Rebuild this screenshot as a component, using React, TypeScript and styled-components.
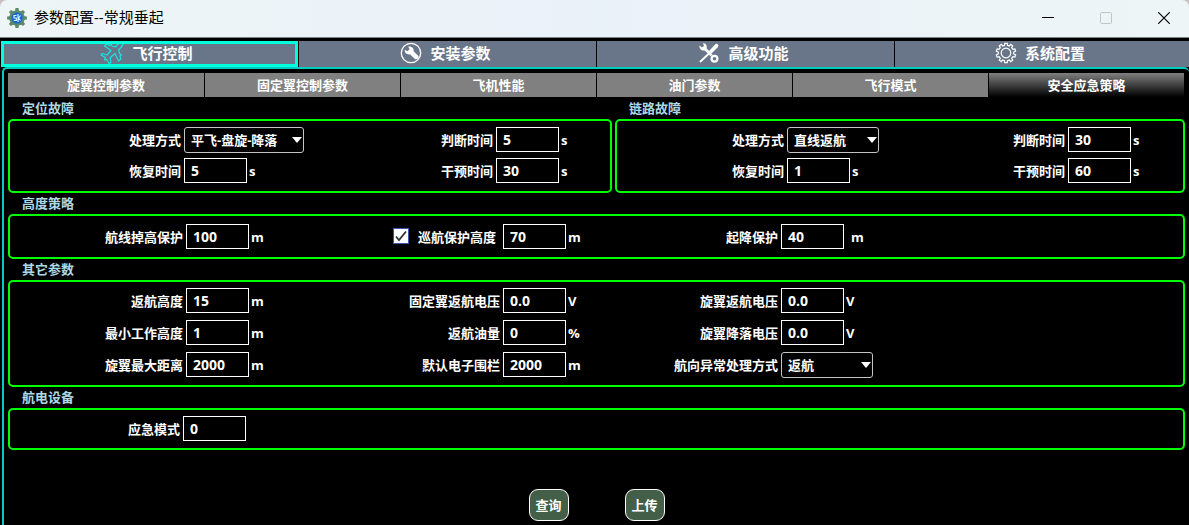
import React, { useState } from 'react';
import styled, { createGlobalStyle, css } from 'styled-components';

const GlobalStyle = createGlobalStyle`
  *, *::before, *::after { box-sizing: border-box; }
  body {
    margin: 0;
    background: #000;
    color: #fff;
    font-family: 'Open Sans', 'Noto Sans CJK SC', sans-serif;
    font-size: 13px;
    font-weight: 700;
  }
  button, input, select { font: inherit; color: inherit; margin: 0; }
`;

const Window = styled.div`
  display: flex;
  flex-direction: column;
  min-height: 100vh;
  overflow: hidden;
`;

const TitleFrame = styled.div`
  background: linear-gradient(#cbbfc2 50%, #808080 50%);
  padding-bottom: 1px;
`;

const TitleBar = styled.header`
  display: flex;
  align-items: center;
  height: 37px;
  padding: 0 10px 2px 7px;
  background: linear-gradient(90deg, #edf5f7, #eaf2f9 50%, #edf5f7);
  border-radius: 7px 7px 0 0;
  color: #000;
`;

const WindowTitle = styled.h1`
  flex: 1;
  margin: 0 0 0 7px;
  padding-bottom: 1px;
  font-size: 15px;
  line-height: 20px;
  font-weight: 400;
`;

const WindowControls = styled.div`
  display: flex;
  gap: 28px;
`;

const WindowButton = styled.button`
  display: grid;
  place-items: center;
  width: 30px;
  height: 30px;
  padding: 0;
  border: 0;
  background: transparent;
`;

const MainTabs = styled.nav`
  display: grid;
  grid-template-columns: 298fr 298fr 298fr 295fr;
  padding-top: 3px;
`;

const MainTab = styled.button<{ $active: boolean }>`
  display: flex;
  align-items: center;
  justify-content: center;
  gap: 8px;
  height: 26px;
  padding: 0 4px 2px 0;
  border: 0;
  border-left: 1px solid #000;
  background: #69768a;
  font-size: 15px;
  line-height: 20px;
  overflow: hidden;
  ${p => p.$active && css`
    margin-left: 1px;
    border: 3px solid #00ffdc;
    padding-right: 6px;
  `}
`;

const Panel = styled.main`
  flex: 1;
  margin-left: 2px;
  padding: 4px;
  border: 2px solid #00cdbd;
  border-width: 2px 0 0 2px;
  border-radius: 5px 5px 0 0;
`;

const SubTabs = styled.nav`
  display: grid;
  grid-template-columns: repeat(6, minmax(0, 1fr));
  margin: 0 1px 1px 0;
`;

const SubTab = styled.button<{ $active: boolean }>`
  height: 24px;
  padding: 0;
  border: 0;
  background: ${p => (p.$active ? 'linear-gradient(#808080, #000)' : '#808080')};
  line-height: 20px;
  & + & { border-left: 1px solid #000; }
`;

const FaultRow = styled.div`
  display: grid;
  grid-template-columns: 604fr 570fr;
  gap: 3px;
`;

const GroupTitle = styled.h2`
  margin: 0 0 0 14px;
  height: 21px;
  font-size: 13px;
  line-height: 20px;
  font-weight: 700;
  color: lightblue;
`;

const GroupBox = styled.div<{ $columns: string; $rowGap?: number; $bottom?: number }>`
  display: grid;
  grid-template-columns: ${p => p.$columns};
  grid-auto-rows: 25px;
  gap: ${p => p.$rowGap ?? 6}px 3px;
  padding: 6px 0 ${p => p.$bottom ?? 8}px;
  border: 2px solid #00ff00;
  border-radius: 5px;
`;

const TallGroupBox = styled(GroupBox)`
  padding-top: 8px;
`;

const FieldLabel = styled.label`
  text-align: right;
  line-height: 27px;
  white-space: nowrap;
`;

const CheckLabel = styled.div`
  display: flex;
  justify-content: flex-end;
  align-items: flex-start;
  gap: 9px;
  padding: 0 4px 0 0;
`;

const CheckBox = styled.input`
  && { margin-top: 4px; }
  appearance: none;
  width: 16px;
  height: 16px;
  border: 1px solid #3a55b0;
  background: #fff;
  &:checked {
    background: #fff url("data:image/svg+xml,%3Csvg xmlns='http://www.w3.org/2000/svg' viewBox='0 0 14 14'%3E%3Cpath d='M2 7.5 5 11 12 2.5' fill='none' stroke='%23333' stroke-width='1.8'/%3E%3C/svg%3E");
  }
`;

const Control = styled.div`
  display: flex;
  min-width: 0;
  height: 25px;
`;

const TextBox = styled.input`
  width: 63px;
  height: 25px;
  padding: 0 6px;
  border: 1px solid #fff;
  background: #000;
  font-size: 14px;
  line-height: 20px;
  border-radius: 0;
  outline: none;
`;

const Unit = styled.span<{ $gap: number }>`
  margin-left: ${p => p.$gap}px;
  line-height: 27px;
`;

const SelectFrame = styled.div<{ $wide: boolean }>`
  position: relative;
  flex: none;
  width: ${p => (p.$wide ? 120 : 92)}px;
  height: 26px;
  & > svg { position: absolute; right: 2px; top: 10px; pointer-events: none; }
`;

const SelectBox = styled.select`
  appearance: none;
  width: 100%;
  height: 26px;
  padding: 0 0 0 6px;
  border: 1px solid #c4c4c4;
  border-radius: 3px;
  background: #000;
  outline: none;
`;

const Actions = styled.footer`
  display: flex;
  justify-content: center;
  gap: 56px;
  margin-top: 39px;
`;

const ActionButton = styled.button`
  width: 40px;
  height: 32px;
  padding: 0;
  border: 1px solid #fff;
  border-radius: 9px;
  background: #435f47;
  line-height: 20px;
`;

function gearPath(c: number, outer: number, inner: number, teeth: number) {
  const points: string[] = [];
  const step = (Math.PI * 2) / teeth;
  for (let i = 0; i < teeth; i++) {
    const a = i * step - Math.PI / 2;
    [[-0.3, inner], [-0.2, outer], [0.2, outer], [0.3, inner]].forEach(([t, r]) => {
      points.push(`${(c + r * Math.cos(a + t * step)).toFixed(2)} ${(c + r * Math.sin(a + t * step)).toFixed(2)}`);
    });
  }
  return `M${points.join('L')}Z`;
}

const AppIcon = () => (
  <svg width="20" height="20" viewBox="0 0 20 20" aria-hidden="true">
    <path d={gearPath(10, 10, 7.8, 8)} fill="#5c8a68" />
    <circle cx="10" cy="10" r="5.6" fill="#1467d8" />
    <path d="M9.500 7.500H7V10h2.300v2.500H6.800M11 6v8M13.500 7.500 11.500 10l2 2.500" fill="none" stroke="#d8f2ff" strokeWidth="1.200" />
  </svg>
);

const PlaneIcon = () => (
  <svg width="24" height="24" viewBox="0 0 24 24" fill="none" stroke="#14e6e6" strokeWidth="1.2" strokeLinejoin="round" aria-hidden="true">
    <path d="M22.500 1C20 .5 18 3 15.500 6L12 5l-1-1.500-1.500 1L7 3 4.500 5l6.500 4.500L7 14l-5-1.500L1 14l4.500 2.500L4.500 19l2.500-.5 2 4 2-1-.8-5L15 12.500l3.500 7.500 2.300-2-.8-3 1.500-1-2-1.500-.8-3.500C21.500 6 24 4 22.500 1Z" />
  </svg>
);

const WrenchIcon = () => (
  <svg width="22" height="22" viewBox="0 0 22 22" aria-hidden="true">
    <circle cx="11" cy="11" r="9.700" fill="none" stroke="#fff" strokeWidth="1.300" />
    <path d="M4.800 7.800 7.500 9.300 9.500 7.300 8.200 4.600C11.300 3.800 14.200 6.200 13.600 9.200L18.400 14C19.200 15.800 17.200 18 15.200 17.200L10.200 12.400C7 13 4.200 10.800 4.800 7.800Z" fill="#fff" />
  </svg>
);

const ToolsIcon = () => (
  <svg width="22" height="22" viewBox="0 0 22 22" aria-hidden="true">
    <path d="M2.500 19.500 11.500 11" stroke="#fff" strokeWidth="1.800" strokeLinecap="round" />
    <path d="M11 9 17 2.500 19 1.500 20.500 3.500 19.500 5.500 13.500 11.500Z" fill="#fff" />
    <path d="M1.500 3.500 4 5.500 6 4 5 1.300C8 1.200 9.500 4 8.500 6.300L14.500 12.500 12.700 14.300 6.500 8.500C3.500 9 1 6.500 1.500 3.500Z" fill="#fff" />
    <circle cx="16.500" cy="16.800" r="2.900" fill="none" stroke="#fff" strokeWidth="2.200" />
  </svg>
);

const GearIcon = () => (
  <svg width="22" height="22" viewBox="0 0 22 22" fill="none" stroke="#fff" strokeWidth="1.200" aria-hidden="true">
    <path d={gearPath(11, 9.8, 7.8, 10)} />
    <circle cx="11" cy="11" r="4.800" />
  </svg>
);

const mainTabs = [
  { name: '飞行控制', Icon: PlaneIcon },
  { name: '安装参数', Icon: WrenchIcon },
  { name: '高级功能', Icon: ToolsIcon },
  { name: '系统配置', Icon: GearIcon },
];

const subTabs = ['旋翼控制参数', '固定翼控制参数', '飞机性能', '油门参数', '飞行模式', '安全应急策略'];

const WIDE_COLUMNS =
  'minmax(0, 173fr) minmax(0, 120fr) minmax(0, 191fr) minmax(0, 120fr) minmax(0, 152fr) minmax(0, 402fr)';

interface FieldProps {
  id: string;
  label: string;
  value: string;
  unit?: string;
  unitGap?: number;
  checkable?: boolean;
}

const NumberField = ({ id, label, value, unit, unitGap = 2, checkable }: FieldProps) => (
  <>
    {checkable ? (
      <CheckLabel>
        <CheckBox type="checkbox" defaultChecked aria-label={`启用${label}`} />
        <FieldLabel htmlFor={id}>{label}</FieldLabel>
      </CheckLabel>
    ) : (
      <FieldLabel htmlFor={id}>{label}</FieldLabel>
    )}
    <Control>
      <TextBox id={id} defaultValue={value} />
      {unit && <Unit $gap={unitGap}>{unit}</Unit>}
    </Control>
  </>
);

interface SelectProps {
  id: string;
  label: string;
  value: string;
  wide?: boolean;
}

const SelectField = ({ id, label, value, wide = false }: SelectProps) => (
  <>
    <FieldLabel htmlFor={id}>{label}</FieldLabel>
    <Control>
      <SelectFrame $wide={wide}>
        <SelectBox id={id} defaultValue={value}>
          <option>{value}</option>
        </SelectBox>
        <svg width="10" height="6" viewBox="0 0 10 6" aria-hidden="true">
          <path d="M0 0h10L5 6Z" fill="#fff" />
        </svg>
      </SelectFrame>
    </Control>
  </>
);

export default function App() {
  const [mainTab, setMainTab] = useState(0);
  const [subTab, setSubTab] = useState(5);

  return (
    <Window>
      <GlobalStyle />
      <TitleFrame>
        <TitleBar>
          <AppIcon />
          <WindowTitle>参数配置--常规垂起</WindowTitle>
          <WindowControls>
            <WindowButton aria-label="最小化">
              <svg width="12" height="12" viewBox="0 0 12 12"><path d="M0 5.500h12" stroke="#000" /></svg>
            </WindowButton>
            <WindowButton aria-label="最大化" disabled>
              <svg width="12" height="12" viewBox="0 0 12 12"><rect x=".5" y=".5" width="11" height="11" rx="1" fill="none" stroke="#bfc6c8" /></svg>
            </WindowButton>
            <WindowButton aria-label="关闭">
              <svg width="12" height="12" viewBox="0 0 12 12"><path d="M.3.3l11.400 11.400M11.700.3.3 11.700" stroke="#000" strokeWidth="1.200" /></svg>
            </WindowButton>
          </WindowControls>
        </TitleBar>
      </TitleFrame>

      <MainTabs>
        {mainTabs.map(({ name, Icon }, i) => (
          <MainTab key={name} $active={i === mainTab} onClick={() => setMainTab(i)}>
            <Icon />
            {name}
          </MainTab>
        ))}
      </MainTabs>

      <Panel>
        <SubTabs>
          {subTabs.map((name, i) => (
            <SubTab key={name} $active={i === subTab} onClick={() => setSubTab(i)}>{name}</SubTab>
          ))}
        </SubTabs>

        <FaultRow>
          <section>
            <GroupTitle>定位故障</GroupTitle>
            <GroupBox $columns="minmax(0, 171fr) minmax(0, 126fr) minmax(0, 180fr) minmax(0, 114fr)">
              <SelectField id="pos-mode" label="处理方式" value="平飞-盘旋-降落" wide />
              <NumberField id="pos-judge" label="判断时间" value="5" unit="s" />
              <NumberField id="pos-recover" label="恢复时间" value="5" unit="s" />
              <NumberField id="pos-intervene" label="干预时间" value="30" unit="s" />
            </GroupBox>
          </section>
          <section>
            <GroupTitle>链路故障</GroupTitle>
            <GroupBox $columns="minmax(0, 167fr) minmax(0, 124fr) minmax(0, 151fr) minmax(0, 115fr)">
              <SelectField id="link-mode" label="处理方式" value="直线返航" />
              <NumberField id="link-judge" label="判断时间" value="30" unit="s" />
              <NumberField id="link-recover" label="恢复时间" value="1" unit="s" />
              <NumberField id="link-intervene" label="干预时间" value="60" unit="s" />
            </GroupBox>
          </section>
        </FaultRow>

        <section>
          <GroupTitle>高度策略</GroupTitle>
          <TallGroupBox $columns={WIDE_COLUMNS}>
            <NumberField id="route-drop" label="航线掉高保护" value="100" unit="m" />
            <NumberField id="cruise-height" label="巡航保护高度" value="70" unit="m" checkable />
            <NumberField id="takeoff-guard" label="起降保护" value="40" unit="m" unitGap={7} />
          </TallGroupBox>
        </section>

        <section>
          <GroupTitle>其它参数</GroupTitle>
          <GroupBox $columns={WIDE_COLUMNS} $rowGap={7}>
            <NumberField id="return-height" label="返航高度" value="15" unit="m" />
            <NumberField id="fixed-voltage" label="固定翼返航电压" value="0.0" unit="V" />
            <NumberField id="rotor-return" label="旋翼返航电压" value="0.0" unit="V" />
            <NumberField id="min-height" label="最小工作高度" value="1" unit="m" />
            <NumberField id="return-fuel" label="返航油量" value="0" unit="%" />
            <NumberField id="rotor-land" label="旋翼降落电压" value="0.0" unit="V" />
            <NumberField id="rotor-distance" label="旋翼最大距离" value="2000" unit="m" />
            <NumberField id="fence" label="默认电子围栏" value="2000" unit="m" />
            <SelectField id="heading-mode" label="航向异常处理方式" value="返航" />
          </GroupBox>
        </section>

        <section>
          <GroupTitle>航电设备</GroupTitle>
          <GroupBox $columns="minmax(0, 170fr) minmax(0, 1000fr)" $bottom={7}>
            <NumberField id="emergency-mode" label="应急模式" value="0" />
          </GroupBox>
        </section>

        <Actions>
          <ActionButton>查询</ActionButton>
          <ActionButton>上传</ActionButton>
        </Actions>
      </Panel>
    </Window>
  );
}
